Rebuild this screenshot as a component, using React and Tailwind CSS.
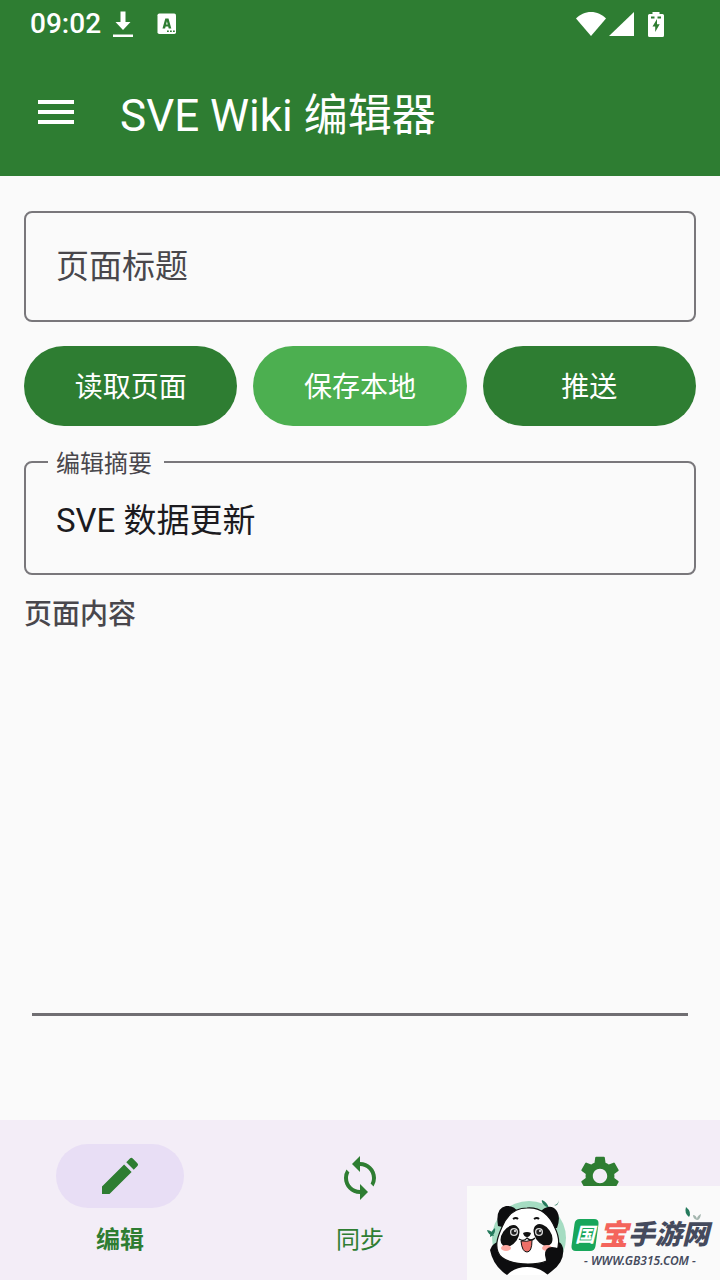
import { MdEdit, MdMenu, MdSettings, MdSync } from 'react-icons/md'

const ACTIONS = [
  { label: '读取页面', tone: 'bg-[#2e7d32]' },
  { label: '保存本地', tone: 'bg-[#4caf50]' },
  { label: '推送', tone: 'bg-[#2e7d32]' },
]

function StatusBar() {
  return (
    <div className="flex h-12 items-center justify-between pl-[30px] pr-14">
      <div className="flex items-center">
        <span className="text-[28px] leading-8 font-medium">09:02</span>
        <svg className="ml-3 h-7 w-5" viewBox="0 0 20 28" fill="currentColor" aria-hidden="true">
          <path d="M7.5 1.500h5v10.500h5L10 20 2.500 12h5zM0 24.500h20v2.400H0z" />
        </svg>
        <svg className="ml-6 h-[22px] w-5" viewBox="0 0 20 22" aria-hidden="true">
          <rect x="0.500" y="0.500" width="18.500" height="20.500" rx="1.800" fill="currentColor" />
          <path
            d="M5.500 15.500 8.300 5.500h3.200l2.800 10h-2.600l-.5-2H8.600l-.5 2zM9.100 11.500h1.600L9.900 8.200z"
            fill="#2e7d32" fillRule="evenodd"
          />
          <path d="M10 17.500h1.800v1.600H10zM13 17.500h1.800v1.600H13zM16 17.500h1.800v1.600H16z" fill="#2e7d32" />
        </svg>
      </div>

      <div className="flex items-center">
        <svg className="h-6 w-[30px]" viewBox="0 0 30 24" fill="currentColor" aria-hidden="true">
          <path d="M15 24 0 6.500C4 2.500 9 0 15 0s11 2.500 15 6.500z" />
        </svg>
        <svg className="ml-[3px] h-6 w-[25px]" viewBox="0 0 25 24" fill="currentColor" aria-hidden="true">
          <path d="M25 0v24H0z" />
        </svg>
        <svg className="ml-[14px] h-[25px] w-4" viewBox="0 0 16 25" aria-hidden="true">
          <path
            d="M1.500 2H4.500V0h7v2h3A1.500 1.500 0 0 1 16 3.500v20a1.500 1.500 0 0 1-1.500 1.500h-13A1.500 1.500 0 0 1 0 23.500v-20A1.500 1.500 0 0 1 1.500 2z"
            fill="currentColor"
          />
          <path d="M3 4.500h3.500v2H3zM9.500 4.500H13v2H9.500zM9 7 4.500 14.500h2.700V20l4.500-7.800H9z" fill="#2e7d32" />
        </svg>
      </div>
    </div>
  )
}

function AppBar() {
  return (
    <div className="flex h-32 items-center gap-10 px-8">
      <button type="button" aria-label="菜单">
        <MdMenu size={48} />
      </button>
      <h1 className="pt-2 text-[44px] leading-[52px]">SVE Wiki 编辑器</h1>
    </div>
  )
}

function Panda() {
  return (
    <svg className="h-[76px] w-20 shrink-0" viewBox="0 0 80 76" aria-hidden="true">
      <circle cx="42" cy="39" r="37" fill="#a5dcc2" />
      <path d="M58 7q-4-4-3-6 5 2 7 8zM0 31q5 0 7 6-6-1-7-6zM3 38q0-5 5-9 1 6-5 9z" fill="#247a5c" />
      <path d="M67 6q4 0 5-5-1 7-5 5z" fill="#247a5c" />
      {/* ears */}
      <path d="M11 27Q8 9 19 7q8-1 13 7L20 29zM67 29 52 14Q60 5 67 9q8 6 3 20z" fill="#0d0d0f" />
      {/* body and raised arms */}
      <path
        d="M5 47q7-8 13 0 1 5 5 9 18 9 38 0-3-8 5-13 8-2 10 6 2 13-11 23L60 76H20Q6 67 3 51z"
        fill="#0d0d0f"
      />
      <path d="M20 76q8-8 20-8t21 8z" fill="#fff" />
      {/* head */}
      <path
        d="M40 9C54 8 63 17 68 29c4 8 5 17 1 25-5 9-16 11-28 11S14 62 11 53C8 45 11 37 15 28 20 16 28 9 40 9z"
        fill="#fff" stroke="#111" strokeWidth="1.200"
      />
      <ellipse cx="23" cy="37" rx="8" ry="12" transform="rotate(35 23 37)" fill="#111" />
      <ellipse cx="56" cy="36" rx="8" ry="12" transform="rotate(-35 56 36)" fill="#111" />
      <circle cx="27" cy="33" r="4" fill="#ddd" />
      <circle cx="27" cy="33" r="2.700" fill="#222" />
      <circle cx="28" cy="32" r="1" fill="#fff" />
      <circle cx="52" cy="33" r="4" fill="#ddd" />
      <circle cx="52" cy="33" r="2.700" fill="#222" />
      <circle cx="53" cy="32" r="1" fill="#fff" />
      <path d="M26 20q3-2 5 0M47 20q3-2 5 0" fill="none" stroke="#111" strokeWidth="2" />
      <path d="M36 34q4-2 8 0-1 4-4 4t-4-4z" fill="#111" />
      <path d="M32 40q5 3 8-1 4 4 8 0" fill="none" stroke="#111" strokeWidth="1.200" />
      <path d="M34 42q6 1 11-1 0 12-5 12-5 0-6-11z" fill="#ed7068" stroke="#111" />
      <ellipse cx="19" cy="49" rx="5" ry="3" fill="#ffaaa2" />
      <ellipse cx="60" cy="49" rx="5" ry="3" fill="#ffaaa2" />
      <path d="M58 56q0-8 7-8 8 0 10 6l-3 9-12 3z" fill="#0d0d0f" />
    </svg>
  )
}

function SiteBadge() {
  return (
    <div className="absolute right-0 bottom-0 flex h-[94px] w-[253px] items-center bg-[#fafafa] pt-2 pl-5">
      <Panda />
      <div className="ml-1 flex flex-col items-center pt-3 whitespace-nowrap">
        <div className="flex items-center italic font-black leading-9">
          <span className="relative flex h-9 w-7 items-center justify-center text-[20px] font-bold text-white">
            <svg className="absolute inset-0 h-9 w-7" viewBox="0 0 28 36" aria-hidden="true">
              <path d="M9 2h14q5 0 4.500 5l-3 22q-.6 5-5.500 5H5q-5 0-4.500-5l3-22Q4 2 9 2z" fill="#18a65b" />
            </svg>
            <span className="relative">国</span>
          </span>
          <span className="text-[29px] text-[#f4645c]">宝</span>
          <span className="text-[27px] text-[#454a5d]">手游网</span>
        </div>
        <span className="font-['Noto_Sans'] text-[12px] leading-4 font-semibold italic text-[#454a5d]">
          - WWW.GB315.COM -
        </span>
      </div>
      <svg className="absolute top-5 right-4 h-4 w-5" viewBox="0 0 20 16" aria-hidden="true">
        <path d="M2 1q6 5 3 10Q0 7 2 1z" fill="#247a5c" />
        <path d="M9 9q3 0 4 4 0-3 4-5-1 6-4 6-4-1-4-5z" fill="#a3b5ae" />
      </svg>
    </div>
  )
}

function BottomNav() {
  return (
    <nav className="relative grid h-40 shrink-0 grid-cols-3 bg-[#f3edf7] text-[24px] leading-8 text-[#2e7d32]">
      <button type="button" className="flex flex-col items-center gap-4 pt-6 font-bold">
        <span className="flex h-16 w-32 items-center justify-center rounded-full bg-[#e8def5]">
          <MdEdit size={48} />
        </span>
        编辑
      </button>
      <button type="button" className="flex flex-col items-center gap-4 pt-6">
        <span className="flex h-16 w-32 items-center justify-center rounded-full pt-1">
          <MdSync size={48} />
        </span>
        同步
      </button>
      <button type="button" aria-label="设置" className="flex flex-col items-center pt-6">
        <span className="flex h-16 w-32 items-center justify-center rounded-full">
          <MdSettings size={48} />
        </span>
      </button>
      <SiteBadge />
    </nav>
  )
}

export default function App() {
  return (
    <div className="flex min-h-screen flex-col bg-[#fafafa] font-[Roboto,'Noto_Sans_CJK_SC',sans-serif] text-[#49474c]">
      <header className="bg-[#2e7d32] text-white">
        <StatusBar />
        <AppBar />
      </header>

      <main className="flex flex-1 flex-col px-6 pt-[35px]">
        <input
          type="text"
          aria-label="页面标题"
          placeholder="页面标题"
          className="h-[111px] w-full rounded-lg border-2 border-[#79777b] px-[30px] text-[33px] outline-none placeholder:text-[#49474c]"
        />

        <div className="mt-6 grid grid-cols-3 gap-4 text-[28px] text-white">
          {ACTIONS.map(a => (
            <button key={a.label} type="button" className={`h-20 rounded-full pt-1 ${a.tone}`}>
              {a.label}
            </button>
          ))}
        </div>

        <fieldset className="mt-5 h-[129px] rounded-lg border-2 border-[#79777b] px-[22px]">
          <legend className="h-8 pr-3 pl-2 text-[24px] leading-9">
            <label htmlFor="summary">编辑摘要</label>
          </legend>
          <input
            id="summary"
            type="text"
            defaultValue="SVE 数据更新"
            className="h-20 w-full px-2 text-[33px] text-[#1c1b1f] outline-none"
          />
        </fieldset>

        <label htmlFor="content" className="mt-[22px] text-[28px] leading-9 font-medium">
          页面内容
        </label>
        <textarea
          id="content"
          className="mx-2 mb-[104px] flex-1 resize-none border-b-[3px] border-[#706e72] outline-none"
        />
      </main>

      <BottomNav />
    </div>
  )
}
